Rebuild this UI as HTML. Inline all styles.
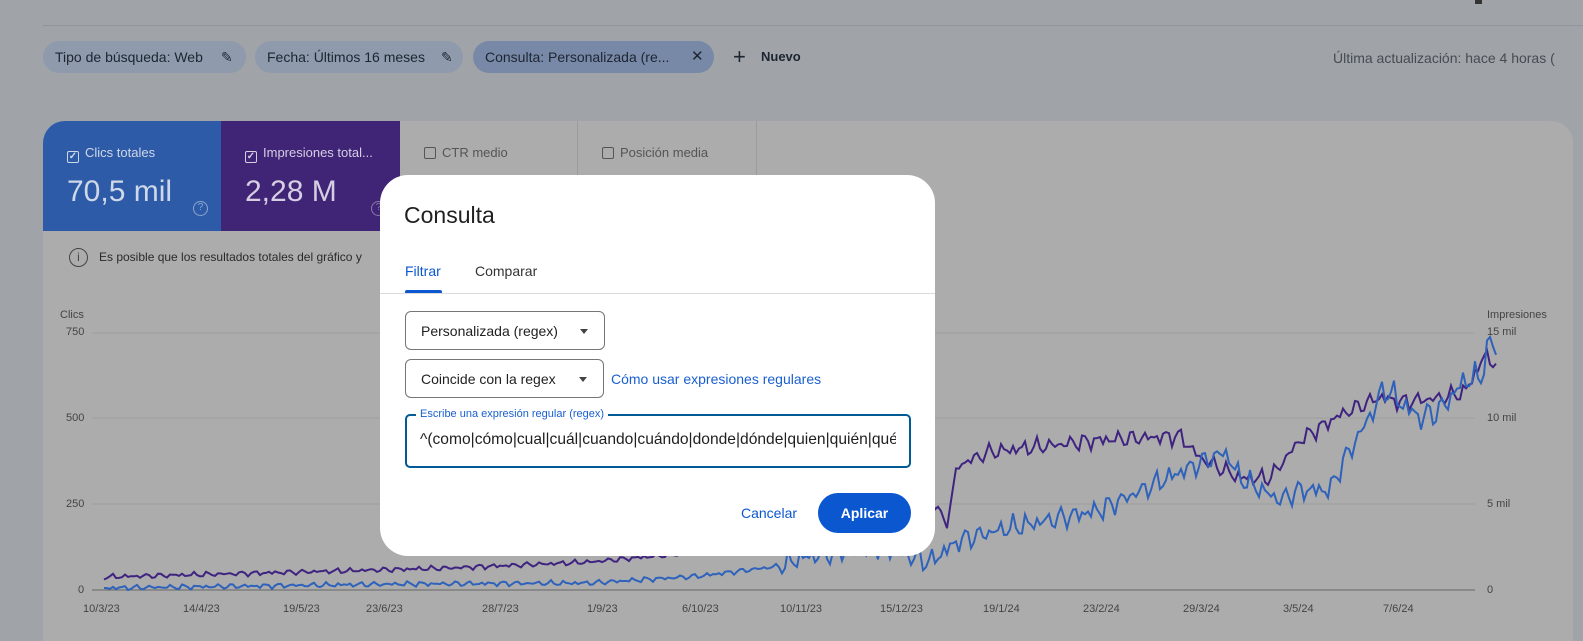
<!DOCTYPE html>
<html><head><meta charset="utf-8"><style>
*{box-sizing:border-box;margin:0;padding:0}
body{width:1583px;height:636px;overflow:hidden;background:#a0a4a8;font-family:"Liberation Sans",Arial,sans-serif;position:relative;color:#1f1f1f}
.a{position:absolute}
.chip{position:absolute;top:41px;height:32px;border-radius:16px;background:#8f9aad;font-size:14px;color:#1d2530;line-height:32px;padding-left:12px}
.tile{position:absolute;top:121px;height:110px;font-size:13px}
.cb{display:inline-block;width:12px;height:12px;border:1.5px solid;border-radius:2px;vertical-align:-2px;margin-right:6px;font-size:10px;line-height:9px;text-align:center;font-weight:bold}
.yl{position:absolute;font-size:11px;color:#444}
.xl{position:absolute;top:603px;font-size:11px;color:#444}
.sel{position:absolute;border:1px solid #747775;border-radius:6px;font-size:14px;color:#1f1f1f;padding-left:15px;line-height:38px;background:#fff}
.tri{position:absolute;right:16px;top:17px;width:0;height:0;border-left:4.5px solid transparent;border-right:4.5px solid transparent;border-top:5px solid #444}
.q{position:absolute;width:15px;height:15px;border:1.5px solid;border-radius:50%;font-size:10px;text-align:center;line-height:12px}
</style></head><body>
<div class="a" style="left:43px;top:25px;width:1540px;height:1px;background:#90959b"></div>
<div class="a" style="left:1475px;top:0;width:7px;height:4px;background:#333"></div>
<div class="chip" style="left:43px;width:203px">Tipo de búsqueda: Web<span class="a" style="left:178px;top:0;font-size:14px">✎</span></div>
<div class="chip" style="left:255px;width:208px">Fecha: Últimos 16 meses<span class="a" style="left:186px;top:0">✎</span></div>
<div class="chip" style="left:473px;width:241px;background:#7889a8">Consulta: Personalizada (re...<span class="a" style="left:218px;top:0;font-size:15px">✕</span></div>
<div class="a" style="left:733px;top:44px;font-size:22px;color:#1d2530;line-height:26px">+</div>
<div class="a" style="left:761px;top:49px;font-size:13px;font-weight:bold;color:#1d2530">Nuevo</div>
<div class="a" style="left:1333px;top:50px;font-size:14px;color:#454b52;white-space:nowrap">Última actualización: hace 4 horas (</div>

<div class="a" style="left:43px;top:121px;width:1530px;height:520px;border-radius:22px 22px 0 0;background:#acacac"></div>
<div class="tile" style="left:43px;width:178px;background:#2d5ba8;border-radius:22px 0 0 0;color:#cfd8e8;padding:24px 0 0 24px"><span class="cb" style="border-color:#cfd8e8">✓</span>Clics totales
<div style="font-size:30px;margin-top:12px">70,5 mil</div><div class="q" style="left:150px;top:80px;border-color:#8fa6cf;color:#8fa6cf">?</div></div>
<div class="tile" style="left:221px;width:179px;background:#402475;color:#d6cfe4;padding:24px 0 0 24px"><span class="cb" style="border-color:#d6cfe4">✓</span>Impresiones total...
<div style="font-size:30px;margin-top:12px">2,28 M</div><div class="q" style="left:150px;top:80px;border-color:#8a7aa8;color:#8a7aa8">?</div></div>
<div class="tile" style="left:400px;width:178px;border-right:1px solid #9c9c9c;color:#555;padding:24px 0 0 24px"><span class="cb" style="border-color:#555"></span>CTR medio</div>
<div class="tile" style="left:578px;width:179px;border-right:1px solid #9c9c9c;color:#555;padding:24px 0 0 24px"><span class="cb" style="border-color:#555"></span>Posición media</div>
<div class="a" style="left:69px;top:248px;width:19px;height:19px;border:1.5px solid #444;border-radius:50%;font-size:12px;text-align:center;line-height:16px;color:#444">i</div>
<div class="a" style="left:99px;top:250px;font-size:12px;color:#2a2a2a">Es posible que los resultados totales del gráfico y</div>

<div class="yl" style="left:60px;top:309px">Clics</div>
<div class="yl" style="left:66px;top:326px">750</div>
<div class="yl" style="left:66px;top:412px">500</div>
<div class="yl" style="left:66px;top:498px">250</div>
<div class="yl" style="left:78px;top:584px">0</div>
<div class="yl" style="left:1487px;top:309px">Impresiones</div>
<div class="yl" style="left:1487px;top:326px">15 mil</div>
<div class="yl" style="left:1487px;top:412px">10 mil</div>
<div class="yl" style="left:1487px;top:498px">5 mil</div>
<div class="yl" style="left:1487px;top:584px">0</div>
<div class="xl" style="left:83px">10/3/23</div><div class="xl" style="left:183px">14/4/23</div><div class="xl" style="left:283px">19/5/23</div><div class="xl" style="left:366px">23/6/23</div><div class="xl" style="left:482px">28/7/23</div><div class="xl" style="left:587px">1/9/23</div><div class="xl" style="left:682px">6/10/23</div><div class="xl" style="left:780px">10/11/23</div><div class="xl" style="left:880px">15/12/23</div><div class="xl" style="left:983px">19/1/24</div><div class="xl" style="left:1083px">23/2/24</div><div class="xl" style="left:1183px">29/3/24</div><div class="xl" style="left:1283px">3/5/24</div><div class="xl" style="left:1383px">7/6/24</div>
<svg class="a" style="left:0;top:0" width="1583" height="636">
<g stroke="#9e9e9e" stroke-width="1"><line x1="92" y1="333" x2="1475" y2="333"/><line x1="92" y1="418" x2="1475" y2="418"/><line x1="92" y1="504" x2="1475" y2="504"/></g>
<line x1="92" y1="590" x2="1475" y2="590" stroke="#666" stroke-width="1"/>
<polyline id="pp" fill="none" stroke="#3f2380" stroke-width="2"/>
<polyline id="bp" fill="none" stroke="#2e62bb" stroke-width="2"/>
</svg>

<div class="a" style="left:380px;top:175px;width:555px;height:381px;background:#fff;border-radius:28px">
<div class="a" style="left:24px;top:27px;font-size:23px;color:#1f1f1f">Consulta</div>
<div class="a" style="left:25px;top:88px;font-size:14px;color:#0b57d0">Filtrar</div>
<div class="a" style="left:95px;top:88px;font-size:14px;color:#333">Comparar</div>
<div class="a" style="left:25px;top:115px;width:37px;height:3px;background:#0b57d0;border-radius:2px 2px 0 0"></div>
<div class="a" style="left:0;top:118px;width:555px;height:1px;background:#dcdcdc"></div>
<div class="sel" style="left:25px;top:136px;width:200px;height:39px">Personalizada (regex)<span class="tri"></span></div>
<div class="sel" style="left:25px;top:184px;width:199px;height:39px">Coincide con la regex<span class="tri"></span></div>
<div class="a" style="left:231px;top:196px;font-size:14px;color:#1a5fd0">Cómo usar expresiones regulares</div>
<div class="a" style="left:25px;top:239px;width:506px;height:54px;border:2.5px solid #005a96;border-radius:5px"></div>
<div class="a" style="left:36px;top:233px;font-size:11px;color:#1a5fd0;background:#fff;padding:0 4px">Escribe una expresión regular (regex)</div>
<div class="a" style="left:40px;top:256px;width:476px;overflow:hidden;white-space:nowrap;font-size:15.6px;color:#1f1f1f">^(como|cómo|cual|cuál|cuando|cuándo|donde|dónde|quien|quién|qué|que)</div>
<div class="a" style="left:361px;top:330px;font-size:14px;color:#0b57d0">Cancelar</div>
<div class="a" style="left:438px;top:318px;width:93px;height:40px;border-radius:20px;background:#0b57d0;color:#fff;font-size:14px;font-weight:bold;text-align:center;line-height:40px">Aplicar</div>
</div>
<script>
function build(id,anch,amp,seed){var pts=[];for(var x=104;x<=1497;x+=3){var i=0;while(i<anch.length-2&&anch[i+1][0]<x)i++;var a=anch[i],b=anch[i+1];var t=(x-a[0])/(b[0]-a[0]);t=Math.max(0,Math.min(1,t));var y=a[1]+(b[1]-a[1])*t;var s=Math.sin(x*1.7+seed)*0.6+Math.sin(x*0.53+seed*2)*0.8+Math.sin(x*3.1)*0.4;y+=s*amp(x);pts.push(x+','+y.toFixed(1));}document.getElementById(id).setAttribute('points',pts.join(' '));}
build('pp',[[104,577],[300,572],[450,568],[590,562],[700,552],[800,545],[900,525],[935,500],[945,528],[950,505],[958,465],[990,452],[1100,440],[1180,436],[1200,458],[1240,478],[1270,478],[1300,440],[1340,415],[1380,397],[1400,402],[1440,398],[1465,392],[1485,355],[1497,365]],function(x){return x<900?1.8:6},1);
build('bp',[[104,588],[400,584],[590,583],[700,576],[780,566],[800,558],[880,546],[905,555],[930,562],[960,540],[1000,530],[1100,510],[1180,472],[1225,452],[1240,478],[1280,500],[1300,490],[1330,490],[1345,458],[1365,425],[1385,388],[1400,402],[1420,418],[1440,410],[1465,380],[1480,378],[1490,342],[1497,348]],function(x){return x<780?1.8:(x<1350?8:10)},4);
</script>
</body></html>
